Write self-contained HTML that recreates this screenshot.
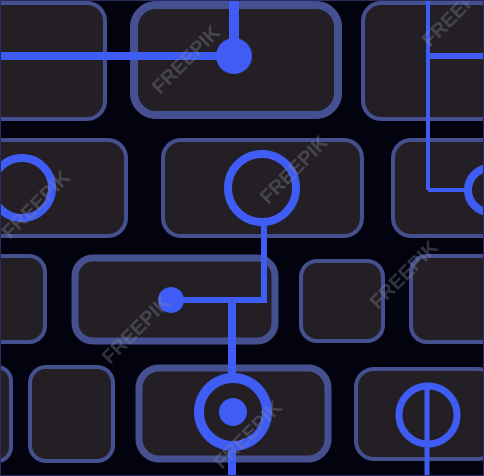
<!DOCTYPE html>
<html><head><style>html,body{margin:0;padding:0;background:#020214;}svg{display:block}</style></head>
<body>
<svg width="484" height="476" viewBox="0 0 484 476" xmlns="http://www.w3.org/2000/svg">
<rect width="484" height="476" fill="#03020f"/>
<g fill="#231f25" stroke="#44508f">
<rect x="-20" y="3" width="125" height="116" rx="18" stroke-width="4"/>
<rect x="134" y="5" width="204" height="110" rx="22" stroke-width="8"/>
<rect x="363" y="3" width="140" height="116" rx="18" stroke-width="4"/>
<rect x="-20" y="140" width="146" height="96" rx="18" stroke-width="4"/>
<rect x="163" y="140" width="199" height="96" rx="18" stroke-width="4"/>
<rect x="393" y="140" width="110" height="96" rx="18" stroke-width="4"/>
<rect x="-20" y="256" width="65" height="86" rx="16" stroke-width="4"/>
<rect x="75" y="258" width="200" height="83" rx="18" stroke-width="7"/>
<rect x="301" y="261" width="82" height="80" rx="16" stroke-width="4"/>
<rect x="411" y="256" width="90" height="86" rx="16" stroke-width="4"/>
<rect x="-20" y="367" width="31" height="94" rx="14" stroke-width="4"/>
<rect x="30" y="367" width="83" height="94" rx="16" stroke-width="4"/>
<rect x="139" y="368" width="189" height="91" rx="20" stroke-width="7"/>
<rect x="356" y="369" width="140" height="90" rx="18" stroke-width="4"/>
</g>
<g stroke="#3f5df5" fill="none">
<line x1="234" y1="0" x2="234" y2="56" stroke-width="10"/>
<line x1="0" y1="56" x2="234" y2="56" stroke-width="8"/>
<line x1="428" y1="0" x2="428" y2="190" stroke-width="4"/>
<line x1="428" y1="56" x2="484" y2="56" stroke-width="6"/>
<line x1="428" y1="190" x2="470" y2="190" stroke-width="4"/>
<circle cx="490" cy="190" r="22" stroke-width="8"/>
<circle cx="22" cy="188" r="30" stroke-width="8"/>
<circle cx="262" cy="188" r="34" stroke-width="8"/>
<polyline points="264,222 264,300 171,300" stroke-width="6"/>
<line x1="232" y1="300" x2="232" y2="476" stroke-width="8"/>
<circle cx="233" cy="412" r="34" stroke-width="10" fill="#231f25"/>
<circle cx="428" cy="415" r="29" stroke-width="7"/>
<line x1="427" y1="388" x2="427" y2="476" stroke-width="5"/>
</g>
<g fill="#3f5df5">
<circle cx="234" cy="56" r="18"/>
<circle cx="171" cy="300" r="13"/>
<circle cx="233" cy="412" r="14"/>
</g>
<g fill="#8a8a9a" fill-opacity="0.35" font-family="Liberation Sans, sans-serif" font-weight="bold" font-size="20">
<text transform="translate(160,95) rotate(-45)">FREEPIK</text>
<text transform="translate(268,205) rotate(-45)">FREEPIK</text>
<text transform="translate(10,240) rotate(-45)">FREEPIK</text>
<text transform="translate(430,48) rotate(-45)">FREEPIK</text>
<text transform="translate(110,365) rotate(-45)">FREEPIK</text>
<text transform="translate(378,310) rotate(-45)">FREEPIK</text>
<text transform="translate(222,470) rotate(-45)">FREEPIK</text>
</g>
<rect x="0.5" y="0.5" width="483" height="475" fill="none" stroke="#2a2a60" stroke-width="1"/>
</svg>
</body></html>
